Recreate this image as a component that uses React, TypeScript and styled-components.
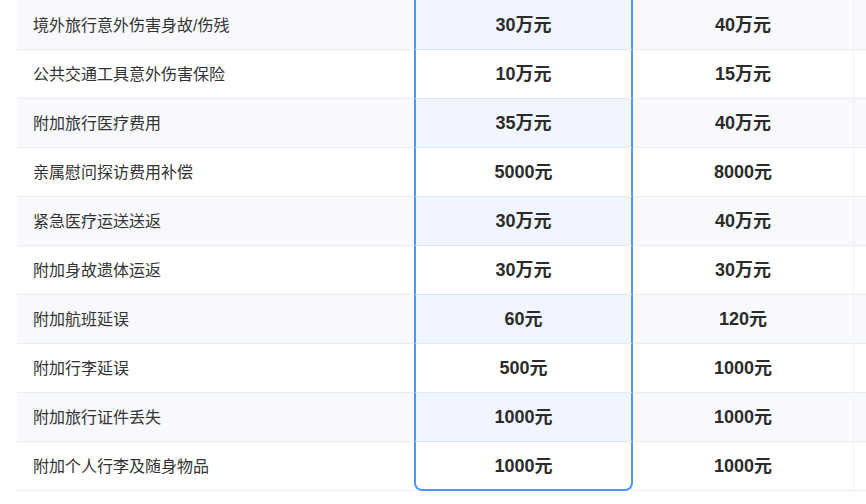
import React from "react";
import styled, { createGlobalStyle } from "styled-components";

const Global = createGlobalStyle`
  html, body { margin: 0; padding: 0; background: #ffffff; }
  body { font-family: "Liberation Sans", "Noto Sans CJK SC", sans-serif; overflow: hidden; }
`;

const Page = styled.div`
  width: 866px;
  height: 504px;
  overflow: hidden;
  padding-left: 17px;
  box-sizing: border-box;
`;

const Table = styled.div`
  display: flex;
  flex-direction: column;
  width: 900px;
`;

const Row = styled.div<{ $striped: boolean }>`
  display: grid;
  grid-template-columns: 397px 219px 220px 1fr;
  background: ${(p) => (p.$striped ? "#f8f9fc" : "#ffffff")};
  &:first-child > div {
    height: 50px;
  }
`;

const Cell = styled.div`
  height: 49px;
  box-sizing: border-box;
  border-bottom: 1px solid #e9ecf1;
  display: flex;
  align-items: center;
`;

const LabelCell = styled(Cell)`
  padding-left: 16px;
  padding-bottom: 2px;
  font-size: 16px;
  color: #333333;
  font-family: "Liberation Sans", "Noto Sans CJK SC", sans-serif;
`;

const ValueCell = styled(Cell)`
  justify-content: center;
  padding-bottom: 4px;
  font-size: 18px;
  font-weight: 700;
  color: #2b2b2b;
  font-family: "Liberation Sans", "Noto Sans CJK SC", sans-serif;
`;

const HighlightCell = styled(ValueCell)<{ $striped: boolean; $last: boolean }>`
  background: ${(p) => (p.$striped ? "#f0f5ff" : "#ffffff")};
  border-left: 2px solid #4f95f7;
  border-right: 2px solid #4f95f7;
  border-bottom: ${(p) => (p.$last ? "2px solid #4f95f7" : "1px solid #dfe8f6")};
  border-radius: ${(p) => (p.$last ? "0 0 8px 8px" : "0")};
`;

const ExtraCell = styled(Cell)`
  border-left: 1px solid #f0f2f5;
`;

const rows: [string, string, string][] = [
  ["境外旅行意外伤害身故/伤残", "30万元", "40万元"],
  ["公共交通工具意外伤害保险", "10万元", "15万元"],
  ["附加旅行医疗费用", "35万元", "40万元"],
  ["亲属慰问探访费用补偿", "5000元", "8000元"],
  ["紧急医疗运送送返", "30万元", "40万元"],
  ["附加身故遗体运返", "30万元", "30万元"],
  ["附加航班延误", "60元", "120元"],
  ["附加行李延误", "500元", "1000元"],
  ["附加旅行证件丢失", "1000元", "1000元"],
  ["附加个人行李及随身物品", "1000元", "1000元"],
];

export default function App() {
  return (
    <>
      <Global />
      <Page>
        <Table>
          {rows.map(([label, a, b], i) => {
            const striped = i % 2 === 0;
            const last = i === rows.length - 1;
            return (
              <Row key={label} $striped={striped}>
                <LabelCell>{label}</LabelCell>
                <HighlightCell $striped={striped} $last={last}>
                  {a}
                </HighlightCell>
                <ValueCell>{b}</ValueCell>
                <ExtraCell />
              </Row>
            );
          })}
        </Table>
      </Page>
    </>
  );
}
